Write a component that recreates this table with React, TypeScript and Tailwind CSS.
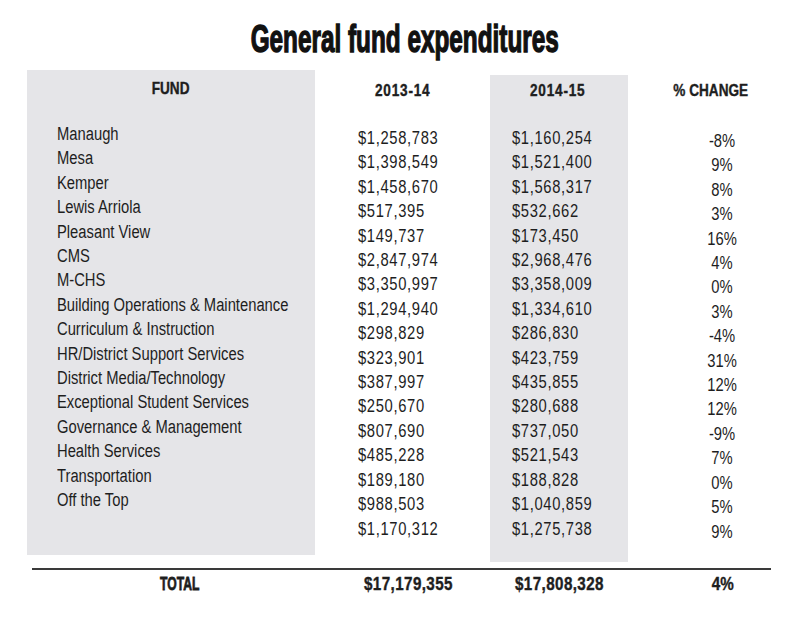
import React from "react";

type Row = { fund: string; a: string; b: string; pct: string };

const rows: Row[] = [
  { fund: "Manaugh", a: "$1,258,783", b: "$1,160,254", pct: "-8%" },
  { fund: "Mesa", a: "$1,398,549", b: "$1,521,400", pct: "9%" },
  { fund: "Kemper", a: "$1,458,670", b: "$1,568,317", pct: "8%" },
  { fund: "Lewis Arriola", a: "$517,395", b: "$532,662", pct: "3%" },
  { fund: "Pleasant View", a: "$149,737", b: "$173,450", pct: "16%" },
  { fund: "CMS", a: "$2,847,974", b: "$2,968,476", pct: "4%" },
  { fund: "M-CHS", a: "$3,350,997", b: "$3,358,009", pct: "0%" },
  { fund: "Building Operations & Maintenance", a: "$1,294,940", b: "$1,334,610", pct: "3%" },
  { fund: "Curriculum & Instruction", a: "$298,829", b: "$286,830", pct: "-4%" },
  { fund: "HR/District Support Services", a: "$323,901", b: "$423,759", pct: "31%" },
  { fund: "District Media/Technology", a: "$387,997", b: "$435,855", pct: "12%" },
  { fund: "Exceptional Student Services", a: "$250,670", b: "$280,688", pct: "12%" },
  { fund: "Governance & Management", a: "$807,690", b: "$737,050", pct: "-9%" },
  { fund: "Health Services", a: "$485,228", b: "$521,543", pct: "7%" },
  { fund: "Transportation", a: "$189,180", b: "$188,828", pct: "0%" },
  { fund: "Off the Top", a: "$988,503", b: "$1,040,859", pct: "5%" },
  { fund: "", a: "$1,170,312", b: "$1,275,738", pct: "9%" },
];

// condensed look: Liberation Sans (Arial metrics) squeezed horizontally
const Narrow = ({ children, className = "" }: { children: React.ReactNode; className?: string }) => (
  <span className={`inline-block whitespace-nowrap ${className}`}>{children}</span>
);

const App = () => {
  return (
    <div className="w-[800px] h-[620px] bg-white text-[#1e1e1e] font-['Liberation_Sans',Arial,sans-serif] overflow-hidden">
      <div className="pt-[20px] h-[70px] flex justify-center">
        <h1 className="h-[38px] text-[38px] leading-none font-bold ml-[9px] text-[#111]">
          <Narrow className="scale-x-[0.64] [-webkit-text-stroke:1.4px_#111]">General fund expenditures</Narrow>
        </h1>
      </div>

      <div className="flex items-start">
        {/* fund names */}
        <div className="ml-[27px] w-[288px] h-[485px] bg-[#e5e5e8] pt-[9px]">
          <div className="text-center text-[17px] leading-[20px] font-bold">
            <Narrow className="scale-x-[0.8] [-webkit-text-stroke:0.4px_#1e1e1e]">FUND</Narrow>
          </div>
          <div className="mt-[23px] pl-[30px] text-[18px] leading-[24.4px]">
            {rows
              .filter((r) => r.fund)
              .map((r) => (
                <div key={r.fund}>
                  <Narrow className="scale-x-[0.82] origin-left">{r.fund}</Narrow>
                </div>
              ))}
          </div>
        </div>

        {/* 2013-14 */}
        <div className="w-[175px] mt-[5px] pt-[6px]">
          <div className="text-center text-[17px] leading-[20px] font-bold tracking-[1px]">
            <Narrow className="scale-x-[0.8] [-webkit-text-stroke:0.4px_#1e1e1e]">2013-14</Narrow>
          </div>
          <div className="mt-[25px] pl-[43px] text-[18px] leading-[24.4px] tracking-[0.8px]">
            {rows.map((r) => (
              <div key={r.a}>
                <Narrow className="scale-x-[0.82] origin-left">{r.a}</Narrow>
              </div>
            ))}
          </div>
        </div>

        {/* 2014-15 */}
        <div className="w-[138px] h-[487px] mt-[5px] pt-[6px] bg-[#e5e5e8]">
          <div className="text-center text-[17px] leading-[20px] font-bold tracking-[1px] pr-[3px]">
            <Narrow className="scale-x-[0.8] [-webkit-text-stroke:0.4px_#1e1e1e]">2014-15</Narrow>
          </div>
          <div className="mt-[25px] pl-[22px] text-[18px] leading-[24.4px] tracking-[0.8px]">
            {rows.map((r) => (
              <div key={r.b}>
                <Narrow className="scale-x-[0.82] origin-left">{r.b}</Narrow>
              </div>
            ))}
          </div>
        </div>

        {/* % change */}
        <div className="w-[166px] mt-[5px] pt-[6px]">
          <div className="text-center text-[17px] leading-[20px] font-bold">
            <Narrow className="scale-x-[0.8] [-webkit-text-stroke:0.4px_#1e1e1e]">% CHANGE</Narrow>
          </div>
          <div className="mt-[28px] pl-[22px] text-center text-[18px] leading-[24.4px]">
            {rows.map((r, i) => (
              <div key={i}>
                <Narrow className="scale-x-[0.82]">{r.pct}</Narrow>
              </div>
            ))}
          </div>
        </div>
      </div>

      <div className="mt-[6px] ml-[32px] w-[739px] h-[2px] bg-[#3a3a3a]" />

      <div className="flex mt-[2px] ml-[27px] text-[19px] leading-[24px] font-bold">
        <div className="w-[288px] pl-[18px] text-center">
          <Narrow className="scale-x-[0.64] [-webkit-text-stroke:0.8px_#1e1e1e]">TOTAL</Narrow>
        </div>
        <div className="w-[175px] pl-[49px] tracking-[0.5px]">
          <Narrow className="scale-x-[0.8] origin-left [-webkit-text-stroke:0.4px_#1e1e1e]">$17,179,355</Narrow>
        </div>
        <div className="w-[138px] pl-[25px] tracking-[0.5px]">
          <Narrow className="scale-x-[0.8] origin-left [-webkit-text-stroke:0.4px_#1e1e1e]">$17,808,328</Narrow>
        </div>
        <div className="w-[166px] pl-[24px] text-center">
          <Narrow className="scale-x-[0.8] [-webkit-text-stroke:0.4px_#1e1e1e]">4%</Narrow>
        </div>
      </div>
    </div>
  );
};

export default App;
